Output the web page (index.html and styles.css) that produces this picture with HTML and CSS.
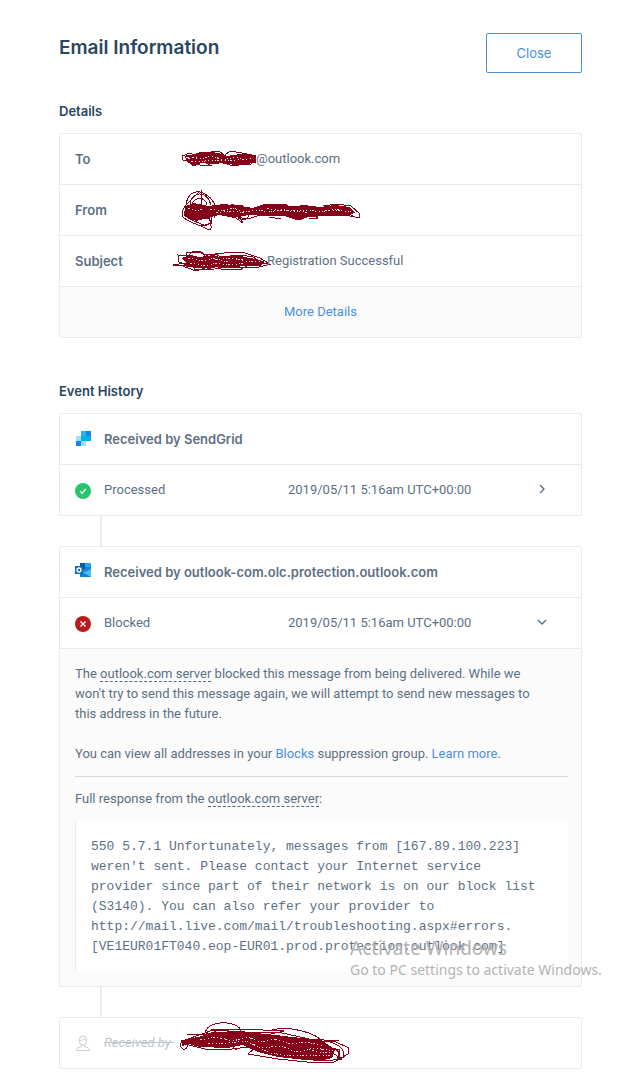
FILE: index.html
```html
<!DOCTYPE html>
<html lang="en">
<head>
<meta charset="utf-8">
<meta name="viewport" content="width=device-width, initial-scale=1">
<title>Email Information</title>
<link rel="stylesheet" href="styles.css">
</head>
<body>
<main class="page">
  <header class="page-header">
    <h1 class="title">Email Information</h1>
    <button class="close" type="button">Close</button>
  </header>

  <section class="section">
    <h2 class="heading">Details</h2>
    <div class="card">
      <dl class="details">
        <div class="detail">
          <dt>To</dt>
          <dd><svg class="scribble" width="75" height="20" viewBox="0 0 75 20" aria-hidden="true"><path class="ink" d="M4 6 14 6 18 4 28 3 38 4 46 7 59 5 70 6 75 7 75 14 63 15 54 16 43 14 33 15 21 14 13 16 7 13 9 9Z"/><path class="line" d="M1 7 9 4 17 8 5 11 13 17 22 12 29 16 19 16 10 13 4 8 22 3 34 4 38 8 27 14M44 6 49 2 61 4 71 6 67 14 53 17 42 14 48 10M30 3 38 2 45 8 37 14M65 5 75 7 70 15 58 15M1 7 2 11 8 12"/><path class="gap" d="M11 8 20 10 31 7 42 11 54 8 65 11 72 9M10 12 24 12 35 11 49 12 60 10"/></svg>@outlook.com</dd>
        </div>
        <div class="detail">
          <dt>From</dt>
          <dd><svg class="scribble" width="180" height="40" viewBox="0 0 180 40" aria-hidden="true"><path class="ink" d="M4 16 13 13 27 16 43 14 58 16 72 18 83 14 99 15 115 16 123 15 139 17 154 15 169 17 174 23 164 26 145 26 128 27 116 30 103 26 84 26 67 25 53 28 38 25 27 28 15 31 3 26Z"/><path class="line" d="M5 14C7 4 13 1 19 2S34 10 34 18M9 14C10 2 26-1 30 15M11 14C14 7 24 6 26 15M20 0v16M18 2C8 12 1 17 1 24S20 35 26 39 31 34 26 24M31 26C30 35 26 37 20 34S8 30 3 24M18 28 28 28 31 33 20 36M33 14v14M44 15 60 15 70 21 66 29 52 26 62 33 58 27 47 24M81 17 93 14 106 14 100 18M50 14 61 18 57 30M60 30 70 28 82 24M110 27 120 30 128 24 137 28 128 29M142 16 156 14 170 16 179 24 178 28 165 25 158 19 174 27M88 27 100 29"/><path class="gap" d="M29 19 41 21 52 18 64 22 77 20 89 22 101 19 113 22 125 20 140 22 152 19 170 22M7 18 14 21 22 19M35 23 50 21 63 23M86 18 99 21 116 20 127 23M144 20 160 21"/></svg></dd>
        </div>
        <div class="detail">
          <dt>Subject</dt>
          <dd class="subject"><svg class="scribble" width="94" height="22" viewBox="0 0 94 22" aria-hidden="true"><path class="ink" d="M8 8 18 5 26 7 40 5 47 7 65 5 76 8 83 9 92 12 87 16 69 16 60 18 46 17 36 18 23 18 10 16 14 13Z"/><path class="line" d="M0 15 17 16 6 12 5 5 19 6 33 10 21 19 41 20 28 16 13 9 13 3 25 2 38 7M17 5C16 0 29 0 31 5S18 13 18 5M42 4 60 2 72 3 87 8 95 13 90 14 80 7 67 5 48 7M7 15 23 21 35 17 48 19 67 20 75 15M45 17 61 18 86 17 98 14M33 5 43 4 51 9M0 15 13 13"/><path class="gap" d="M15 8 29 11 41 8 53 12 65 9 77 12 87 11M17 13 31 16 43 13 57 15 72 13M42 10 59 8 71 10"/></svg>Registration Successful</dd>
        </div>
      </dl>
      <a class="more" href="#">More Details</a>
    </div>
  </section>

  <section class="section history">
    <h2 class="heading">Event History</h2>
    <div class="card">
      <h3 class="row server">
        <svg class="icon" width="16" height="18" viewBox="0 0 16 18" aria-hidden="true"><path fill="#9cdfff" d="M1 6h5v5H1zm5 5h5v5H6z"/><path fill="#00b2e3" d="M6 6h5v5H6zm5 0h5v5h-5z"/><path fill="#1a82e2" d="M1 11h5v5H1zm10-10h5v5h-5z"/><path fill="#27b5f0" d="M6 1h5v5H6z"/></svg>
        Received by SendGrid
      </h3>
      <div class="row event">
        <svg class="status" width="16" height="16" viewBox="0 0 16 16" aria-hidden="true"><circle cx="8" cy="8" r="8" fill="#28c56f"/><path d="m5.3 8.3 1.8 2L10.7 6" fill="none" stroke="#fff" stroke-width="1.3"/></svg>
        <span>Processed</span>
        <time>2019/05/11 5:16am UTC+00:00</time>
        <button class="toggle" type="button" aria-label="Show processed event" aria-expanded="false"><svg width="12" height="14" viewBox="0 0 12 14"><path d="m4 2 4 4-4 4"/></svg></button>
      </div>
    </div>
    <div class="connector"></div>
    <div class="card">
      <h3 class="row server">
        <svg class="icon" width="16" height="18" viewBox="0 0 16 18" aria-hidden="true"><path fill="#1685d8" d="M5 0h11v14H5z"/><path fill="#0756a4" d="M5 0h5v6H5z"/><path fill="#28a8ea" d="M10 0h6v4h-6z"/><path fill="#45c2f5" d="m5 8 5 1 6-3v8H5z"/><path fill="#137fd2" d="m5 8 11 6H5z"/><path fill="#0a68bd" d="M0 3h8v8H0z"/><circle cx="4" cy="7" r="2" fill="none" stroke="#fff" stroke-width="1.4"/></svg>
        Received by outlook-com.olc.protection.outlook.com
      </h3>
      <div class="row event">
        <svg class="status" width="16" height="16" viewBox="0 0 16 16" aria-hidden="true"><circle cx="8" cy="8" r="8" fill="#b71c1c"/><path d="m5.500 5.500 5 5m0-5-5 5" fill="none" stroke="#fff" stroke-width="1.2"/></svg>
        <span>Blocked</span>
        <time>2019/05/11 5:16am UTC+00:00</time>
        <button class="toggle" type="button" aria-label="Hide blocked event" aria-expanded="true"><svg width="12" height="14" viewBox="0 0 12 14"><path d="m2 4 4 4 4-4"/></svg></button>
      </div>
      <div class="panel">
        <p class="reason">The <span class="hint">outlook.com server</span> blocked this message from being delivered. While we won't try to send this message again, we will attempt to send new messages to this address in the future.</p>
        <p>You can view all addresses in your <a href="#">Blocks</a> suppression group. <a href="#">Learn more</a>.</p>
        <hr>
        <p class="response-label">Full response from the <span class="hint">outlook.com server</span>:</p>
        <pre class="response">550 5.7.1 Unfortunately, messages from [167.89.100.223]
weren't sent. Please contact your Internet service
provider since part of their network is on our block list
(S3140). You can also refer your provider to
http://mail.live.com/mail/troubleshooting.aspx#errors.
[VE1EUR01FT040.eop-EUR01.prod.protection.outlook.com]</pre>
      </div>
    </div>
    <div class="connector"></div>
    <div class="card">
      <div class="row pending">
        <svg class="icon" width="16" height="16" viewBox="0 0 16 16" fill="none" stroke="#c9ced3" aria-hidden="true"><path d="M4.500 4.500a3.500 3.500 0 0 1 7 0v2a3.500 3.500 0 0 1-7 0zM4.500 5.500c3 0 4-1 4.500-2 .5 1 1.500 1.500 2.500 1.500M6.500 9.500v2l-4 1.500c-1 .5-1 1-1 2.500h13c0-1.500 0-2-1-2.500l-4-1.500v-2"/></svg>
        <em class="unsent">Received by </em>
        <svg class="scribble" width="170" height="42" viewBox="0 0 170 42" aria-hidden="true"><path class="ink" d="M1 18 9 17 22 14 32 10 61 9 76 11 96 13 121 16 141 18 150 24 155 28 152 36 140 39 125 38 98 35 78 30 63 23 47 26 20 25 9 22 2 24Z"/><path class="line" d="M1 21C4 17 9 20 7 25S-1 26 1 21M6 12 40 13 31 7 61 7 104 9 91 12M25 10C30-2 55-2 61 8M25 10C35 18 52 19 61 8M92 8C112 3 137 12 143 20M8 17 33 8 64 10 98 10 129 17 159 19M5 22 25 27 52 27 77 24 68 32 98 37 127 40 154 40 168 32 169 26 156 20 132 19M118 20 145 26 162 37 145 39 118 30 135 22 160 28 157 38M150 20C159 23 166 27 163 36M148 26C158 27 162 31 158 37M6 17 28 22 43 18 57 28"/><path class="gap" d="M20 18 36 15 53 19 67 15 81 20 95 17 110 22 127 20 143 24M28 22 48 21 66 19 81 26 101 24 116 30 135 26 154 29M72 22 90 31 111 34 132 33 151 34M132 28 142 31 151 30"/></svg>
      </div>
    </div>
  </section>
</main>
<aside class="watermark">
  <div class="watermark-title">Activate Windows</div>
  <div>Go to PC settings to activate Windows.</div>
</aside>
</body>
</html>
```
FILE: styles.css
```css
* { box-sizing: border-box; }
body {
  margin: 0;
  background: #fff;
  color: #5d7083;
  font: 13px/20px Roboto, "Liberation Sans", sans-serif;
}
h1, h2, h3, p, dl, dd, pre { margin: 0; }
a { color: #4a90e2; text-decoration: none; }
.page { padding: 33px 55px 10px 59px; }
.page-header { display: flex; justify-content: space-between; align-items: flex-start; }
.title { color: #294661; font: 600 19px/30px Inter, sans-serif; }
.close {
  width: 96px;
  height: 40px;
  border: 1px solid #4a90d2;
  border-radius: 2px;
  background: #fff;
  color: #4a90e2;
  font: 13px/20px Inter, sans-serif;
}
.section { margin-top: 28px; }
.history { margin-top: 43px; }
.heading { margin-bottom: 12px; color: #294661; font: 600 13px/20px Inter, sans-serif; }
.card { border: 1px solid #e9ecef; border-radius: 2px; }
.detail { display: flex; align-items: center; height: 51px; padding: 0 15px; border-bottom: 1px solid #e9ecef; }
dt { width: 106px; font: 600 13px/20px Inter, sans-serif; }
dd { display: flex; align-items: center; }
.subject { margin-left: -8px; }
.scribble { flex: none; overflow: visible; shape-rendering: crispEdges; }
.ink { fill: #850019; }
.line { fill: none; stroke: #850019; }
.gap { fill: none; stroke: #f3dfe3; stroke-dasharray: 2 2 1 3 1 2 1 1; }
.more { display: block; padding: 15px; background: #fbfbfb; text-align: center; }
.row { display: flex; align-items: center; height: 50px; padding: 0 15px; }
.server { height: 51px; border-bottom: 1px solid #e9ecef; font: 600 13px/20px Inter, sans-serif; }
.icon { flex: none; margin-right: 13px; }
.event { display: grid; grid-template-columns: 29px 184px 1fr 30px; padding-right: 24px; }
.status { align-self: center; margin-top: 2px; }
.toggle { display: flex; justify-content: center; align-items: center; height: 24px; padding: 0; border: 0; background: none; }
.toggle path { fill: none; stroke: #546b81; stroke-width: 1.3; }
.connector { width: 2px; height: 30px; margin-left: 41px; background: #e9ecef; }
.panel { padding: 15px 13px 15px 15px; border-top: 1px solid #e9ecef; background: #fbfbfb; }
.panel p + p { margin-top: 20px; }
.reason { padding-right: 18px; }
.hint { border-bottom: 1px dashed #546b81; }
hr { height: 1px; margin: 12px 0; border: 0; background: #d5d8dc; }
.response {
  margin-top: 12px;
  padding: 16px 15px 14px;
  border-left: 1px solid #e9ecef;
  background: #fff;
  font: 13px/20px "Liberation Mono", monospace;
  white-space: pre-wrap;
}
.pending { color: #bfc5cb; }
.unsent { margin-right: 6px; text-decoration: line-through; white-space: pre; }
.watermark {
  position: absolute;
  top: 936px;
  left: 350px;
  color: #b3b3b3;
  font: 14px/20px "Noto Sans", sans-serif;
  white-space: nowrap;
  pointer-events: none;
}
.watermark-title { font-size: 19px; line-height: 24px; }
```
